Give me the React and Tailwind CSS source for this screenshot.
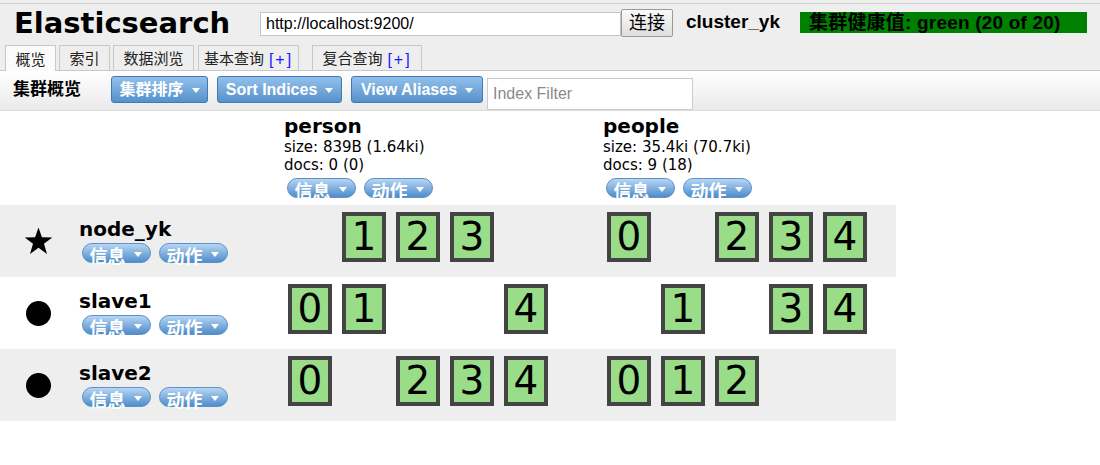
import React from "react";

const VER = "font-['DejaVu_Sans','Noto_Sans_CJK_SC',sans-serif]";
const ARI = "font-['Liberation_Sans','Noto_Sans_CJK_SC',sans-serif]";

function Tri() {
  return (
    <span className="inline-block w-0 h-0 border-l-[4px] border-r-[4px] border-t-[5px] border-l-transparent border-r-transparent border-t-white" />
  );
}

function Pill({ label }) {
  return (
    <div className={`w-[69px] h-[20px] rounded-full border border-[#5d90c6] bg-linear-to-b from-[#b6d6f4] to-[#4e8ccb] flex items-start justify-center gap-[8px] text-white font-bold ${ARI}`}>
      <span className="text-[18px] leading-[18px] mt-[4px] -ml-[2px]">{label}</span>
      <span className="mt-[8px] flex"><Tri /></span>
    </div>
  );
}

function Pills({ className }) {
  return (
    <div className={`flex gap-[8px] ${className}`}>
      <Pill label="信息" />
      <Pill label="动作" />
    </div>
  );
}

function ToolBtn({ label, className }) {
  return (
    <div className={`h-[27px] mt-[5px] rounded-[3px] border border-[#3f79b6] bg-linear-to-b from-[#93c0ea] to-[#5591cc] flex items-center justify-center gap-[8px] text-white font-bold text-[16px] ${ARI} ${className}`}>
      <span>{label}</span>
      <span className="flex mt-[1px]"><Tri /></span>
    </div>
  );
}

function Shard({ n }) {
  if (n === null) return <div className="w-[44px] h-[50px] shrink-0" />;
  return (
    <div className={`w-[44px] h-[50px] shrink-0 border-[4px] border-[#444] bg-[#99dd88] flex items-center justify-center text-[39px] leading-[42px] text-black ${VER}`}>
      {n}
    </div>
  );
}

function Shards({ set }) {
  const slots = [0, 1, 2, 3, 4];
  return (
    <div className="flex gap-[10px] pl-[8px] pt-[7px]">
      {slots.map((s) => (
        <Shard key={s} n={set.includes(s) ? s : null} />
      ))}
    </div>
  );
}

function Star() {
  return (
    <svg width="29" height="28" viewBox="0 0 28 27">
      <polygon
        fill="#000"
        points="14,0.5 17.3,9.8 27.3,10 19.3,16.1 22.2,26 14,20.1 5.8,26 8.7,16.1 0.7,10 10.7,9.8"
      />
    </svg>
  );
}

function Dot() {
  return <div className="w-[25px] h-[25px] rounded-full bg-black" />;
}

function NodeRow({ name, icon, person, people, bg }) {
  return (
    <div className={`flex h-[72px] ${bg}`}>
      <div className="w-[280px] flex shrink-0">
        <div className="w-[76px] flex items-center justify-center">{icon}</div>
        <div className="pl-[3px] pt-[12px]">
          <div className={`text-[20px] leading-[24px] font-bold text-black ${VER}`}>{name}</div>
          <Pills className="mt-[2px] ml-[3px]" />
        </div>
      </div>
      <div className="w-[319px] shrink-0">
        <Shards set={person} />
      </div>
      <div className="w-[297px] shrink-0">
        <Shards set={people} />
      </div>
    </div>
  );
}

function IndexHead({ name, size, docs, className }) {
  return (
    <div className={`pl-[4px] pt-[3px] ${className}`}>
      <div className={`text-[20px] leading-[24px] font-bold text-black ${VER}`}>{name}</div>
      <div className={`text-[15px] leading-[18px] text-black ${VER}`}>{size}</div>
      <div className={`text-[15px] leading-[18px] text-black ${VER}`}>{docs}</div>
      <Pills className="mt-[4px] ml-[3px]" />
    </div>
  );
}

function Tab({ children, active, className }) {
  return (
    <div
      className={`border border-b-0 border-[#c8c8c8] flex items-center justify-center pt-[3px] text-[15px] text-[#222] ${ARI} ${
        active ? "h-[26px] -mb-px bg-[#fbfbfb] relative" : "h-[25px] bg-[#eeeeee]"
      } ${className}`}
    >
      {children}
    </div>
  );
}

export default function App() {
  return (
    <div className="w-[1100px] h-[465px] bg-white overflow-hidden">
      <div className="bg-[#eeeeee] pt-[3px]">
        <div className="border-t border-[#cfcfcf] h-[41px] flex items-center">
          <div className={`w-[260px] pl-[14px] text-[29px] font-bold text-black leading-[34px] -mt-[3px] ${VER}`}>
            Elasticsearch
          </div>
          <div className={`w-[361px] h-[24px] bg-white border border-[#c4c4c4] flex items-center pl-[5px] text-[16px] text-black ${ARI}`}>
            http://localhost:9200/
          </div>
          <div className={`w-[52px] h-[28px] -mt-[2px] bg-linear-to-b from-[#fafafa] to-[#dedede] border border-[#9a9a9a] rounded-[2px] flex items-center justify-center text-[18px] text-black ${ARI}`}>
            连接
          </div>
          <div className={`w-[127px] pl-[13px] text-[19px] font-bold text-black -mt-[3px] ${ARI}`}>cluster_yk</div>
          <div className={`w-[287px] h-[21px] -mt-[3px] bg-[#008000] flex items-center pl-[9px] text-[19px] leading-[21px] font-bold text-black tracking-[0.2px] ${ARI}`}>
            集群健康值: green (20 of 20)
          </div>
        </div>
        <div className="h-[27px] border-b border-[#c8c8c8] flex items-end pl-[5px]">
          <Tab active className="w-[51px]">概览</Tab>
          <Tab className="w-[51px] ml-[3px]">索引</Tab>
          <Tab className="w-[81px] ml-[3px]">数据浏览</Tab>
          <Tab className="w-[101px] ml-[4px]">
            基本查询<span className="text-[#1a1aff] ml-[5px] text-[16px] tracking-[2px]">[+]</span>
          </Tab>
          <Tab className="w-[110px] ml-[13px]">
            复合查询<span className="text-[#1a1aff] ml-[5px] text-[16px] tracking-[2px]">[+]</span>
          </Tab>
        </div>
      </div>
      <div className="h-[40px] border-b border-[#dcdcdc] bg-linear-to-b from-[#ffffff] to-[#eaeaea] flex items-start">
        <div className={`w-[111px] pl-[13px] pt-[6px] text-[17px] font-bold text-black ${ARI}`}>集群概览</div>
        <ToolBtn label="集群排序" className="w-[97px]" />
        <ToolBtn label="Sort Indices" className="w-[125px] ml-[9px]" />
        <ToolBtn label="View Aliases" className="w-[132px] ml-[9px]" />
        <div className={`w-[206px] h-[32px] mt-[7px] ml-[4px] bg-white border border-[#cccccc] flex items-center pl-[5px] text-[16px] text-[#8a8a8a] ${ARI}`}>
          Index Filter
        </div>
      </div>
      <div className="w-[896px]">
        <div className="flex h-[94px]">
          <div className="w-[280px] shrink-0" />
          <IndexHead name="person" size="size: 839B (1.64ki)" docs="docs: 0 (0)" className="w-[319px] shrink-0" />
          <IndexHead name="people" size="size: 35.4ki (70.7ki)" docs="docs: 9 (18)" className="w-[297px] shrink-0" />
        </div>
        <NodeRow name="node_yk" icon={<Star />} person={[1, 2, 3]} people={[0, 2, 3, 4]} bg="bg-[#eeeeee]" />
        <NodeRow name="slave1" icon={<Dot />} person={[0, 1, 4]} people={[1, 3, 4]} bg="bg-white" />
        <NodeRow name="slave2" icon={<Dot />} person={[0, 2, 3, 4]} people={[0, 1, 2]} bg="bg-[#eeeeee]" />
      </div>
    </div>
  );
}
